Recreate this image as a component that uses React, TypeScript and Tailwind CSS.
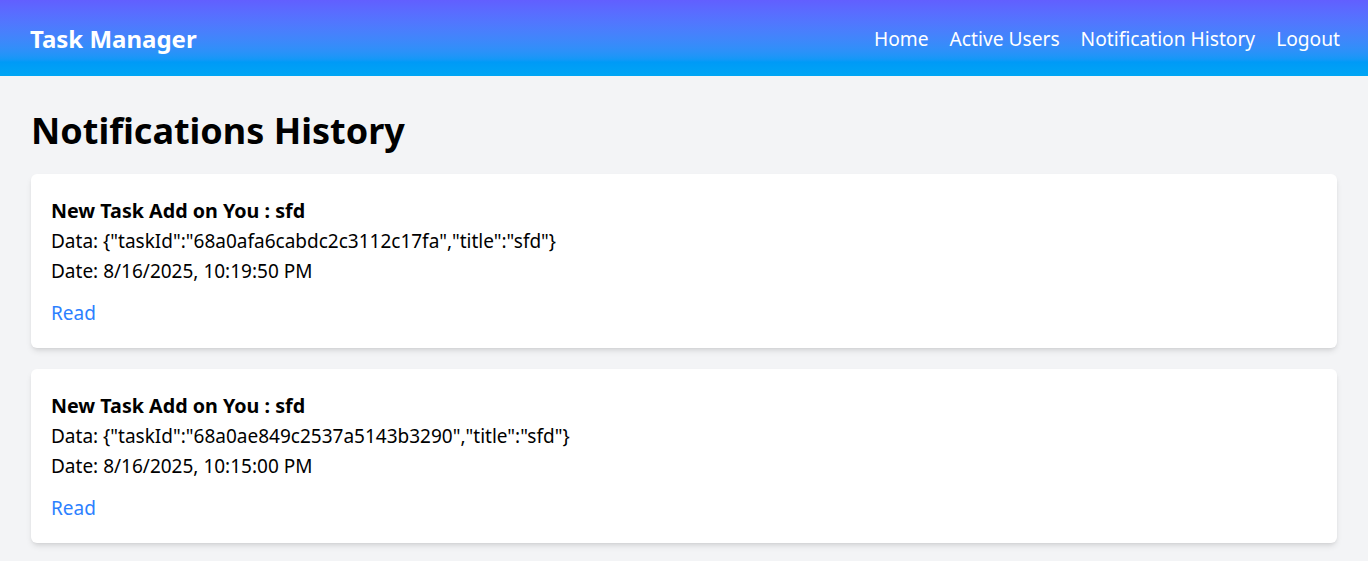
import React from "react";

const notifications = [
  {
    title: "New Task Add on You : sfd",
    data: '{"taskId":"68a0afa6cabdc2c3112c17fa","title":"sfd"}',
    date: "8/16/2025, 10:19:50 PM",
  },
  {
    title: "New Task Add on You : sfd",
    data: '{"taskId":"68a0ae849c2537a5143b3290","title":"sfd"}',
    date: "8/16/2025, 10:15:00 PM",
  },
];

const App: React.FC = () => {
  return (
    <div className="min-h-screen bg-gray-100 font-['Noto_Sans',sans-serif] text-black">
      {/* Navbar */}
      <nav className="h-[76px] bg-gradient-to-b from-indigo-500 to-sky-500 flex items-center justify-between pl-[30px] pr-7 pt-[2px] text-white">
        <h1 className="text-2xl font-bold">Task Manager</h1>
        <div className="flex items-center gap-[21px] text-[19.2px]">
          <a href="#">Home</a>
          <a href="#">Active Users</a>
          <a href="#">Notification History</a>
          <a href="#">Logout</a>
        </div>
      </nav>

      <main className="px-[31px] pt-[35px]">
        <h2 className="text-4xl font-bold mb-[23px]">Notifications History</h2>
        {notifications.map((n, i) => (
          <div
            key={i}
            className="bg-white rounded-md shadow-md px-5 pt-[22px] pb-5 mb-[21px] text-[19px] leading-[30px]"
          >
            <p className="font-bold text-[19.7px]">{n.title}</p>
            <p>Data: {n.data}</p>
            <p>Date: {n.date}</p>
            <button className="mt-3 text-blue-500">Read</button>
          </div>
        ))}
      </main>
    </div>
  );
};

export default App;
